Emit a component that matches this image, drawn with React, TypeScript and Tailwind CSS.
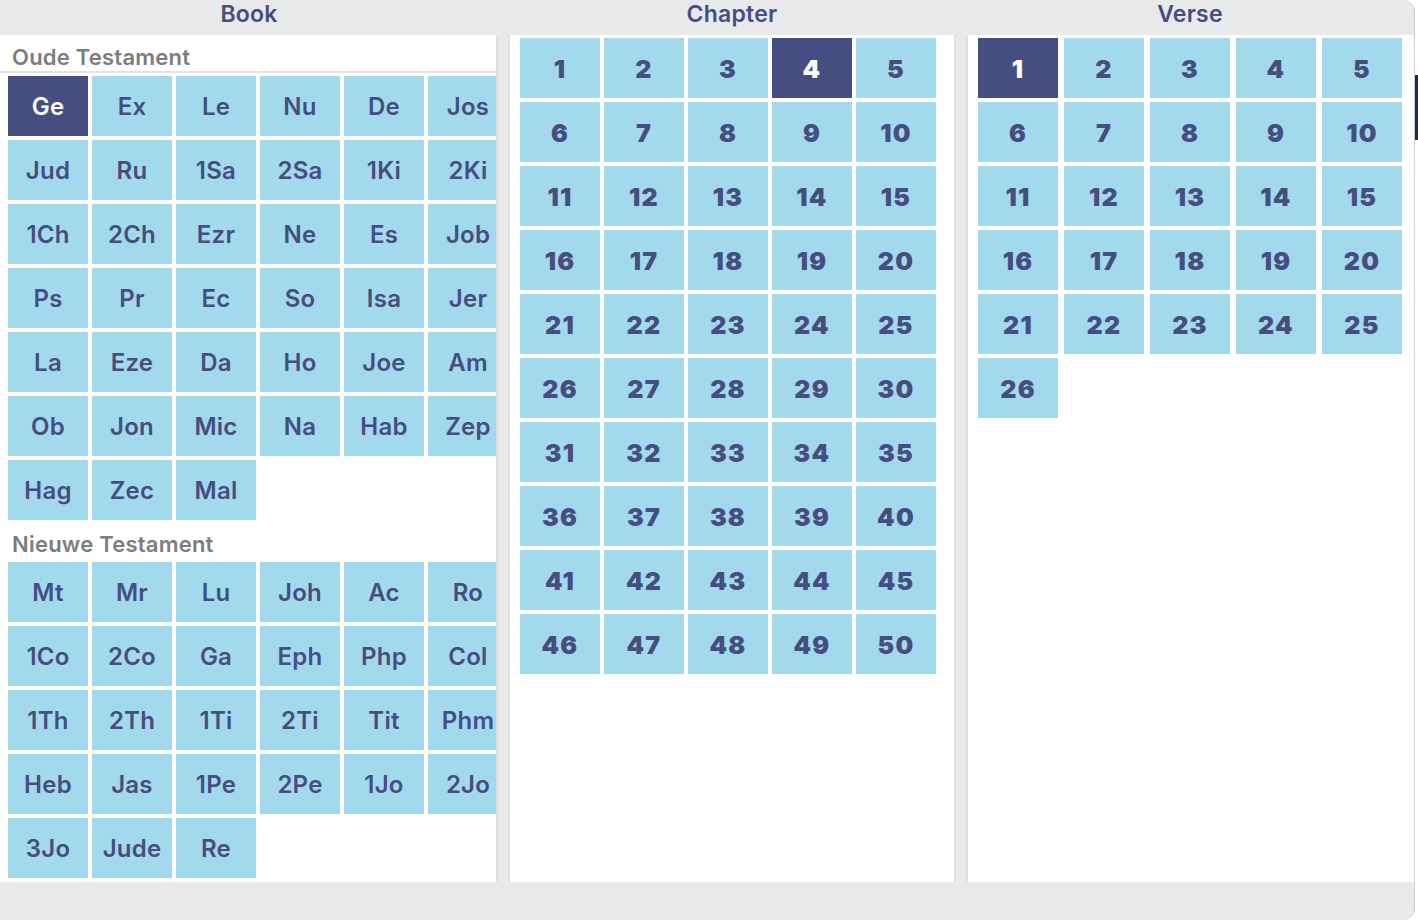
import React from 'react';

const OT = [
  'Ge', 'Ex', 'Le', 'Nu', 'De', 'Jos',
  'Jud', 'Ru', '1Sa', '2Sa', '1Ki', '2Ki',
  '1Ch', '2Ch', 'Ezr', 'Ne', 'Es', 'Job',
  'Ps', 'Pr', 'Ec', 'So', 'Isa', 'Jer',
  'La', 'Eze', 'Da', 'Ho', 'Joe', 'Am',
  'Ob', 'Jon', 'Mic', 'Na', 'Hab', 'Zep',
  'Hag', 'Zec', 'Mal',
];

const NT = [
  'Mt', 'Mr', 'Lu', 'Joh', 'Ac', 'Ro',
  '1Co', '2Co', 'Ga', 'Eph', 'Php', 'Col',
  '1Th', '2Th', '1Ti', '2Ti', 'Tit', 'Phm',
  'Heb', 'Jas', '1Pe', '2Pe', '1Jo', '2Jo',
  '3Jo', 'Jude', 'Re',
];

const range = (n: number) => Array.from({ length: n }, (_, i) => i + 1);

const BookTile = ({ label, active }: { label: string; active?: boolean }) => (
  <div
    className={`h-[60px] w-[80px] flex items-center justify-center pt-[2px] text-[24px] font-semibold tracking-[0.01em] ${
      active ? 'bg-[#464d80] text-white' : 'bg-[#a2d9ec] text-[#464d80]'
    }`}
  >
    {label}
  </div>
);

const NumTile = ({ n, active }: { n: number; active?: boolean }) => (
  <div
    className={`h-[60px] w-[80px] flex items-center justify-center pt-[3px] text-[25px] font-black tracking-[0.05em] ${
      active ? 'bg-[#464d80] text-white' : 'bg-[#a2d9ec] text-[#464d80]'
    }`}
  >
    {n}
  </div>
);

const SectionLabel = ({ children, line }: { children: React.ReactNode; line?: boolean }) => (
  <div
    className={`pl-3 flex items-center text-[22px] font-semibold tracking-[0.01em] text-[#7d7d7d] ${
      line ? 'h-[38px] pt-[9px] border-b-2 border-[#e1e2e4] mb-[3px]' : 'h-[42px] pt-[6px]'
    }`}
  >
    {children}
  </div>
);

export default function App() {
  return (
    <div
      className="relative w-[1418px] h-[920px] bg-white overflow-hidden"
      style={{ fontFamily: 'Inter, "Noto Sans", sans-serif' }}
    >
      {/* desktop peeking past the window edge */}
      <div className="absolute right-0 top-[75px] w-[3px] h-[65px] bg-[#1d2b45]" />

      <div className="w-[1415px] h-[920px] bg-[#e8e9eb] rounded-r-[12px] border-r border-[#cfd0d2] flex flex-col">
        {/* column titles */}
        <div className="h-[35px] flex text-[23px] font-semibold tracking-[0.01em] text-[#464d80] leading-[28px]">
          <div className="w-[498px] text-center">Book</div>
          <div className="w-[448px] ml-[10px] text-center">Chapter</div>
          <div className="w-[448px] ml-[10px] text-center">Verse</div>
        </div>

        {/* panels */}
        <div className="h-[847px] flex gap-[10px]">
          <div className="w-[498px] h-full bg-white border-r-2 border-[#dedfe1] overflow-hidden">
            <SectionLabel line>Oude Testament</SectionLabel>
            <div className="pl-2 grid grid-cols-[repeat(6,80px)] gap-[4px] w-[600px]">
              {OT.map((b) => (
                <BookTile key={b} label={b} active={b === 'Ge'} />
              ))}
            </div>
            <SectionLabel>Nieuwe Testament</SectionLabel>
            <div className="pl-2 grid grid-cols-[repeat(6,80px)] gap-[4px] w-[600px]">
              {NT.map((b) => (
                <BookTile key={b} label={b} />
              ))}
            </div>
          </div>

          <div className="w-[448px] h-full bg-white border-x-2 border-[#dedfe1] pt-[3px] pl-[10px]">
            <div className="grid grid-cols-[repeat(5,80px)] gap-[4px]">
              {range(50).map((n) => (
                <NumTile key={n} n={n} active={n === 4} />
              ))}
            </div>
          </div>

          <div className="w-[448px] h-full bg-white border-l-2 border-[#dedfe1] pt-[3px] pl-[10px]">
            <div className="grid grid-cols-[repeat(5,80px)] gap-x-[6px] gap-y-[4px]">
              {range(26).map((n) => (
                <NumTile key={n} n={n} active={n === 1} />
              ))}
            </div>
          </div>
        </div>
      </div>
    </div>
  );
}
